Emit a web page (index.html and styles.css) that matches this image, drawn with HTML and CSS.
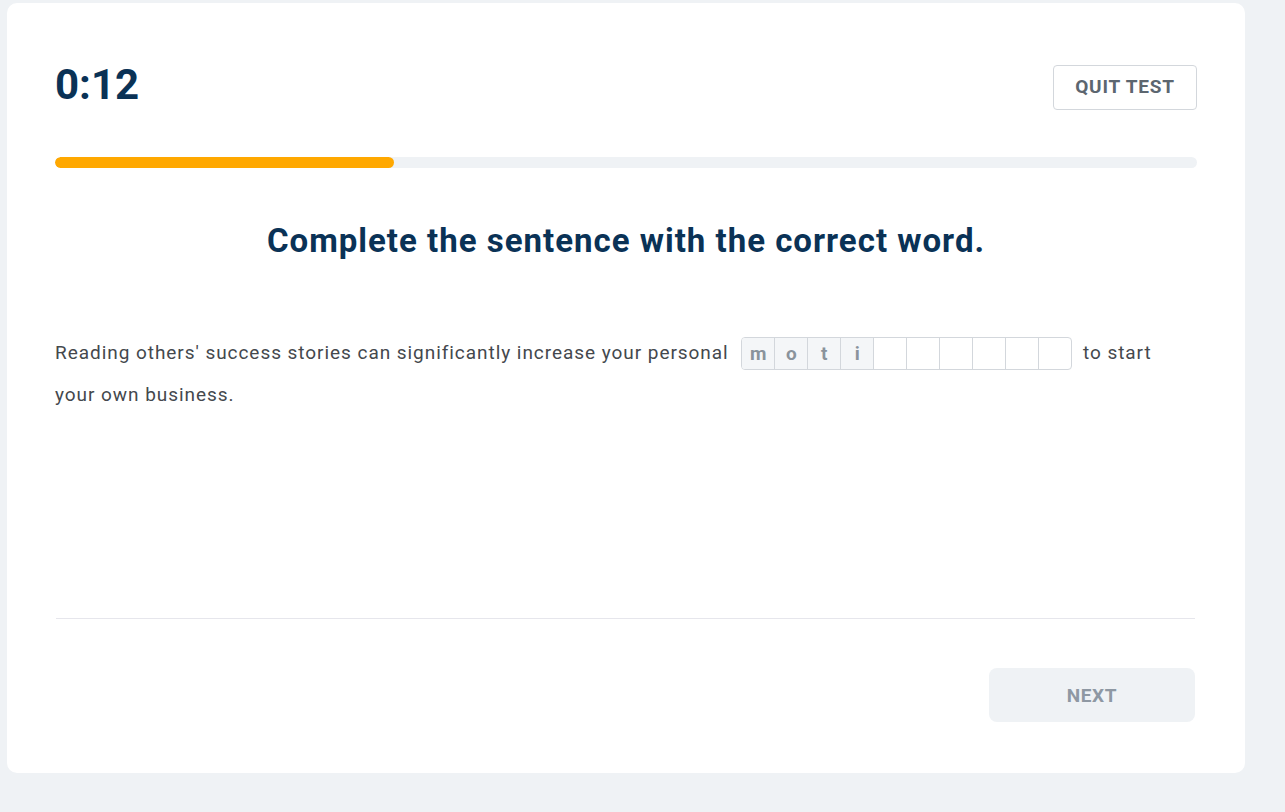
FILE: index.html
```html
<!DOCTYPE html>
<html lang="en">
<head>
<meta charset="utf-8">
<title>Test</title>
<link rel="stylesheet" href="styles.css">
</head>
<body>
<main class="card">
  <header class="top">
    <div class="timer">0:12</div>
    <button class="quit">QUIT TEST</button>
  </header>
  <div class="progress"><div class="progress-fill" style="width:29.7%"></div></div>
  <h1 class="title">Complete the sentence with the correct word.</h1>
  <p class="sentence">Reading others' success stories can significantly increase your personal <span class="word"><span class="cell filled">m</span><span class="cell filled">o</span><span class="cell filled">t</span><span class="cell filled">i</span><span class="cell"></span><span class="cell"></span><span class="cell"></span><span class="cell"></span><span class="cell"></span><span class="cell"></span></span> to start your own business.</p>
  <div class="spacer"></div>
  <footer class="bottom">
    <button class="next">NEXT</button>
  </footer>
</main>
</body>
</html>
```
FILE: styles.css
```css
* { box-sizing: border-box; }
html, body { margin: 0; padding: 0; }
body {
  background: #eff2f5;
  font-family: Roboto, "Liberation Sans", sans-serif;
  width: 1285px;
  height: 812px;
  overflow: hidden;
}
.card {
  margin: 3px 0 0 7px;
  width: 1238px;
  height: 770px;
  background: #fff;
  border-radius: 10px;
  padding: 62px 48px 51px 48px;
  display: flex;
  flex-direction: column;
}
.top {
  display: flex;
  justify-content: space-between;
  align-items: center;
  height: 45px;
}
.timer {
  font-size: 42px;
  line-height: 42px;
  font-weight: 700;
  color: #0a3256;
  letter-spacing: 0;
  margin-top: -5px;
}
.quit {
  width: 144px;
  height: 45px;
  border: 1px solid #d3d7dc;
  border-radius: 4px;
  background: #fff;
  font-family: inherit;
  font-size: 19px;
  font-weight: 700;
  letter-spacing: 0.8px;
  color: #5c6670;
  padding: 0 0 2px 0;
}
.progress {
  margin-top: 47px;
  height: 11px;
  border-radius: 6px;
  background: #eff2f5;
  overflow: hidden;
}
.progress-fill {
  height: 100%;
  background: #ffa800;
  border-radius: 6px;
}
.title {
  margin: 53px 0 0;
  text-align: center;
  font-size: 33px;
  line-height: 40px;
  font-weight: 700;
  letter-spacing: 1px;
  color: #0a3256;
}
.sentence {
  margin: 71px 0 0 0;
  padding-right: 4px;
  font-size: 19px;
  line-height: 42px;
  letter-spacing: 0.95px;
  color: #44484d;
}
.word {
  display: inline-flex;
  vertical-align: middle;
  margin: 0 5px 0 7px;
  border: 1px solid #d3d7dc;
  border-radius: 4px;
  overflow: hidden;
  letter-spacing: 0;
}
.cell {
  width: 33px;
  height: 31px;
  border-left: 1px solid #d3d7dc;
  display: flex;
  align-items: center;
  justify-content: center;
  font-size: 19px;
  font-weight: 700;
  color: #8a939c;
}
.cell:first-child { border-left: 0; width: 32px; }
.cell.filled { background: #f4f6f8; }
.spacer { flex: 1; }
.bottom {
  border-top: 1px solid #e6e6ec;
  display: flex;
  justify-content: flex-end;
  padding-top: 49px;
  margin-right: 2px;
  margin-left: 1px;
}
.next {
  width: 206px;
  height: 54px;
  border: 0;
  border-radius: 8px;
  background: #eff2f5;
  font-family: inherit;
  font-size: 19px;
  font-weight: 700;
  letter-spacing: 0.6px;
  color: #8e98a3;
  padding: 0;
}
```
